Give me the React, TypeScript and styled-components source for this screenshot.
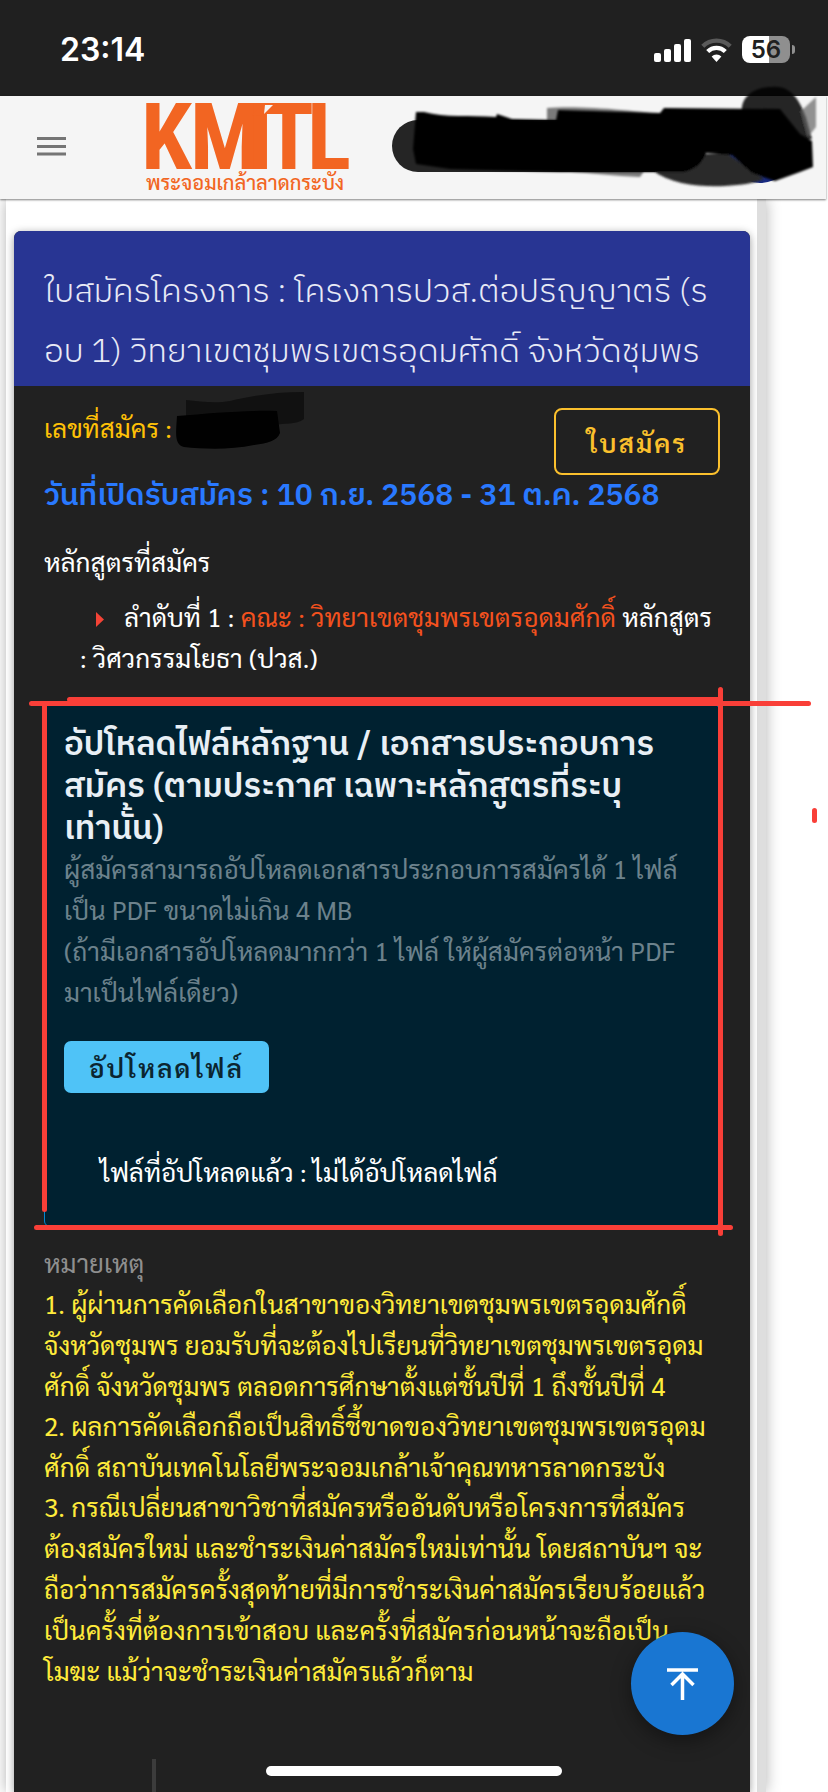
import React from 'react';
import styled, { createGlobalStyle } from 'styled-components';

const looped = '"Sarabun", "Noto Sans Thai Looped", "Loma", "Noto Sans", sans-serif';
const loopless = '"IBM Plex Sans Thai", "Noto Sans Thai", "Noto Sans", sans-serif';

const GlobalStyle = createGlobalStyle`
  * { box-sizing: border-box; }
  body { margin: 0; background: #fff; color: #fff; font-family: ${looped}; }
  h1, h2, p, ul, ol { margin: 0; padding: 0; font-weight: 400; }
  ol, ul { list-style: none; }
  button { font-family: inherit; cursor: pointer; }
`;

const Screen = styled.div`
  position: relative;
  display: flex;
  flex-direction: column;
  height: 100vh;
  overflow: hidden;
`;

const StatusBar = styled.div`
  display: flex;
  flex: none;
  align-items: center;
  justify-content: space-between;
  height: 96px;
  padding: 3px 33px 0 60px;
  background: #202020;
`;

const Clock = styled.time`
  font: 600 32px/40px Inter, sans-serif;
`;

const StatusIcons = styled.div`
  display: flex;
  align-items: center;
  gap: 10px;
`;

const Battery = styled.div`
  position: relative;
  width: 48px;
  height: 27px;
  border-radius: 8px;
  background: linear-gradient(90deg, #fff 56%, #8f8f8f 56%);
  color: #202020;
  font: 600 24px/27px Inter, sans-serif;
  text-align: center;
  margin-right: 5px;

  &::after {
    content: '';
    position: absolute;
    left: 50px;
    top: 9px;
    width: 3px;
    height: 9px;
    border-radius: 0 4px 4px 0;
    background: #8f8f8f;
  }
`;

const AppBar = styled.header`
  position: relative;
  z-index: 1;
  display: flex;
  flex: none;
  align-items: center;
  height: 103px;
  margin-right: 2px;
  padding: 0 8px 3px 37px;
  background: #f5f5f5;
  box-shadow: 0 1px 2px rgba(0, 0, 0, 0.5);
`;

const MenuButton = styled.button`
  display: flex;
  padding: 0;
  border: 0;
  background: none;
`;

const Brand = styled.a`
  display: flex;
  flex-direction: column;
  width: 200px;
  margin-left: 80px;
  color: #f26522;
  text-decoration: none;
  white-space: nowrap;

  svg { overflow: visible; }
`;

const BrandName = styled.span`
  font: 500 20px/24px ${looped};
`;

const Redaction = styled.svg`
  flex: none;
  margin-left: auto;
  overflow: visible;
`;

const Page = styled.main`
  display: flex;
  flex: 1;
  min-height: 0;
  margin: 0 62px 0 6px;
  padding: 32px 7px 0 8px;
  border-right: 9px solid #dedede;
  background: #fff;
  box-shadow: 0 0 14px rgba(0, 0, 0, 0.3);
`;

const Card = styled.article`
  flex: 1;
  min-width: 0;
  border-radius: 7px 7px 0 0;
  background: #212121;
  box-shadow: 0 2px 8px rgba(0, 0, 0, 0.4);
  white-space: nowrap;
`;

const Title = styled.h1`
  padding: 32px 30px 3px;
  border-radius: 7px 7px 0 0;
  background: #283593;
  color: #e8eaf6;
  font: 300 33px/60px ${loopless};
`;

const CardBody = styled.div`
  padding: 22px 30px 0;
`;

const Summary = styled.div`
  display: flex;
  justify-content: space-between;
  height: 67px;
`;

const ApplicationNo = styled.p`
  position: relative;
  color: #ffc107;
  font-size: 26px;
  line-height: 38px;
`;

const NumberCover = styled.svg`
  position: absolute;
  left: 130px;
  top: -20px;
`;

const OutlineButton = styled.button`
  width: 166px;
  height: 67px;
  border: 2px solid #fbc02d;
  border-radius: 8px;
  background: none;
  color: #fbc02d;
  font-size: 26px;
  font-weight: 600;
  letter-spacing: 2px;
`;

const Period = styled.p`
  padding-top: 2px;
  color: #2979ff;
  font: 600 30px/40px ${loopless};
`;

const SectionLabel = styled.p`
  margin-top: 24px;
  font-size: 26px;
  line-height: 41px;
`;

const Programmes = styled.ul`
  margin: 14px 0 0 36px;
  font-size: 26px;
  line-height: 41px;
`;

const Bullet = styled.svg`
  margin: 0 20px 0 16px;
`;

const Faculty = styled.span`
  color: #f4511e;
`;

const Panel = styled.section`
  position: relative;
  height: 523px;
  margin-top: 26px;
  padding: 20px 19px 0;
  border: 1px solid #0288d1;
  border-radius: 6px;
  background: #002130;
`;

const PanelTitle = styled.h2`
  color: #e8eff5;
  font: 600 33px/42px ${loopless};
`;

const Hint = styled.p`
  margin-top: -3px;
  color: #6c828c;
  font-size: 26px;
  line-height: 41px;
`;

const UploadButton = styled.button`
  display: block;
  width: 205px;
  height: 52px;
  margin-top: 29px;
  border: 0;
  border-radius: 7px;
  background: #4fc3f7;
  color: #0b2530;
  font-size: 26px;
  font-weight: 600;
  letter-spacing: 2px;
`;

const FileState = styled.p`
  margin: 58px 0 0 36px;
  font-size: 26px;
  line-height: 41px;
`;

const Stroke = styled.i<{ $top?: string; $bottom?: string; $left?: string; $right?: string; $vertical?: boolean }>`
  position: absolute;
  top: ${p => p.$top ?? 'auto'};
  bottom: ${p => p.$bottom ?? 'auto'};
  left: ${p => p.$left ?? 'auto'};
  right: ${p => p.$right ?? 'auto'};
  ${p => (p.$vertical ? 'width: 5px;' : 'height: 5px;')}
  border-radius: 3px;
  background: #f93f38;
`;

const Remarks = styled.section`
  padding-top: 15px;
  font-size: 26px;
  line-height: 41px;
`;

const RemarkLabel = styled.h2`
  color: #8f8f8f;
  font-size: 26px;
  line-height: 41px;
`;

const RemarkList = styled.ol`
  color: #ffeb3b;

  li + li { margin-top: -1px; }
`;

const TableEdge = styled.div`
  width: 4px;
  height: 60px;
  margin: 68px 0 0 108px;
  background: #3c3c3c;
`;

const TopButton = styled.button`
  position: absolute;
  right: 94px;
  bottom: 57px;
  z-index: 2;
  display: grid;
  place-items: center;
  width: 103px;
  height: 103px;
  padding: 0;
  border: 0;
  border-radius: 50%;
  background: #1976d2;
  box-shadow: 0 6px 20px rgba(0, 0, 0, 0.4);
`;

const HomeIndicator = styled.div`
  position: absolute;
  bottom: 16px;
  left: 50%;
  z-index: 2;
  width: 296px;
  height: 10px;
  margin-left: -148px;
  border-radius: 5px;
  background: #fff;
`;

const remarks = [
  [
    '1. ผู้ผ่านการคัดเลือกในสาขาของวิทยาเขตชุมพรเขตรอุดมศักดิ์',
    'จังหวัดชุมพร ยอมรับที่จะต้องไปเรียนที่วิทยาเขตชุมพรเขตรอุดม',
    'ศักดิ์ จังหวัดชุมพร ตลอดการศึกษาตั้งแต่ชั้นปีที่ 1 ถึงชั้นปีที่ 4',
  ],
  [
    '2. ผลการคัดเลือกถือเป็นสิทธิ์ชี้ขาดของวิทยาเขตชุมพรเขตรอุดม',
    'ศักดิ์ สถาบันเทคโนโลยีพระจอมเกล้าเจ้าคุณทหารลาดกระบัง',
  ],
  [
    '3. กรณีเปลี่ยนสาขาวิชาที่สมัครหรืออันดับหรือโครงการที่สมัคร',
    'ต้องสมัครใหม่ และชำระเงินค่าสมัครใหม่เท่านั้น โดยสถาบันฯ จะ',
    'ถือว่าการสมัครครั้งสุดท้ายที่มีการชำระเงินค่าสมัครเรียบร้อยแล้ว',
    'เป็นครั้งที่ต้องการเข้าสอบ และครั้งที่สมัครก่อนหน้าจะถือเป็น',
    'โมฆะ แม้ว่าจะชำระเงินค่าสมัครแล้วก็ตาม',
  ],
];

const Lines = ({ of }: { of: string[] }) => (
  <>
    {of.map((line, i) => (
      <React.Fragment key={line}>
        {i > 0 && <br />}
        {line}
      </React.Fragment>
    ))}
  </>
);

const Signal = () => (
  <svg width="37" height="24" fill="#fff" aria-hidden="true">
    <rect x="0" y="15" width="7" height="9" rx="2" />
    <rect x="10" y="11" width="7" height="13" rx="2" />
    <rect x="20" y="6" width="7" height="18" rx="2" />
    <rect x="30" y="1" width="7" height="23" rx="2" />
  </svg>
);

const Wifi = () => (
  <svg width="31" height="24" viewBox="0 0 31 24" aria-hidden="true">
    <path d="M1.8 8.2a19.5 19.5 0 0 1 27.4 0" fill="none" stroke="#5a5a5a" strokeWidth="4.4" />
    <path d="M6.7 13.6a12.4 12.4 0 0 1 17.6 0" fill="none" stroke="#fff" strokeWidth="4.2" />
    <path d="M10.6 18.6a7 7 0 0 1 9.8 0L15.5 24z" fill="#fff" />
  </svg>
);

const Logo = () => (
  <svg width="200" height="72" viewBox="0 0 200 72" role="img" aria-label="KMITL">
    <g fill="#f26522">
      <text
        x="-5 44 102 118 161"
        y="71"
        fontFamily="'Roboto Condensed', 'Barlow Condensed', 'Fira Sans Condensed', 'Liberation Sans Narrow', Lato, sans-serif"
        fontWeight="700"
        fontSize="92"
      >
        KMITL
      </text>
      <path d="M106 17 117 6H132L117 18Z" />
    </g>
    <path d="M119 7h8l-9 9z" fill="#f5f5f5" />
  </svg>
);

export default function App() {
  return (
    <Screen>
      <GlobalStyle />
      <StatusBar>
        <Clock>23:14</Clock>
        <StatusIcons>
          <Signal />
          <Wifi />
          <Battery>56</Battery>
        </StatusIcons>
      </StatusBar>

      <AppBar>
        <MenuButton aria-label="เมนู">
          <svg width="29" height="20" stroke="#757575" strokeWidth="3" aria-hidden="true">
            <path d="M0 2.5h29M0 10.5h29M0 18h29" />
          </svg>
        </MenuButton>
        <Brand href="#">
          <Logo />
          <BrandName>พระจอมเกล้าลาดกระบัง</BrandName>
        </Brand>
        <Redaction width="426" height="103" viewBox="392 96 426 103" aria-hidden="true">
          <defs>
            <filter id="soft" x="-5%" y="-20%" width="110%" height="140%">
              <feGaussianBlur stdDeviation="1" />
            </filter>
          </defs>
          <rect x="392" y="121" width="312" height="52" rx="26" fill="#252525" />
          <circle cx="760" cy="149" r="35" fill="#182a82" />
          <g filter="url(#soft)">
            <path d="M547 109C580 106 640 112 668 116V125H547Z" fill="#000" opacity=".5" />
            <path d="M570 171H645L640 178C615 177 590 174 570 173Z" fill="#000" opacity=".5" />
            <path d="M652 171C672 186 700 188 725 187C742 186 755 184 764 180L728 155H690Z" fill="#2c2c2c" />
            <path d="M742 114C740 97 755 88 772 88C792 86 800 103 806 118L812 140H745Z" fill="#000" opacity=".85" />
            <path d="M801 112 816 98V128L808 138Z" fill="#666" opacity=".7" />
            <path d="M416 113 424 113C445 119 470 116 496 118L497 115 512 120 556 121 558 111 660 114 664 109 780 110 800 135 812 142 813 168 800 173 775 182 752 174 732 156 706 154C702 165 694 171 684 173L560 173 450 170 416 165 413 150Z" fill="#000" />
          </g>
        </Redaction>
      </AppBar>

      <Page>
        <Card>
          <Title>
            <Lines of={['ใบสมัครโครงการ : โครงการปวส.ต่อปริญญาตรี (ร', 'อบ 1) วิทยาเขตชุมพรเขตรอุดมศักดิ์ จังหวัดชุมพร']} />
          </Title>
          <CardBody>
            <Summary>
              <ApplicationNo>
                เลขที่สมัคร :
                <NumberCover width="130" height="64" viewBox="0 0 130 64" aria-hidden="true">
                  <path d="M12 12c14 1 28 4 44 1 20-5 45-9 74-9v27c-8 6-20 4-30 6H12z" fill="#111" />
                  <path d="M3 28c35-3 70-6 100-5l3 22c-3 8-12 10-26 12-24 5-50 4-70 2-10-2-8-14-7-31z" fill="#010101" />
                </NumberCover>
              </ApplicationNo>
              <OutlineButton>ใบสมัคร</OutlineButton>
            </Summary>
            <Period>วันที่เปิดรับสมัคร : 10 ก.ย. 2568 - 31 ต.ค. 2568</Period>
            <SectionLabel>หลักสูตรที่สมัคร</SectionLabel>
            <Programmes>
              <li>
                <Bullet width="8" height="15" viewBox="0 0 8 15" aria-hidden="true">
                  <path d="M0 0 8 7.500 0 15Z" fill="#f44336" />
                </Bullet>
                ลำดับที่ 1 : <Faculty>คณะ : วิทยาเขตชุมพรเขตรอุดมศักดิ์</Faculty> หลักสูตร
                <br />: วิศวกรรมโยธา (ปวส.)
              </li>
            </Programmes>

            <Panel>
              <PanelTitle>
                <Lines of={['อัปโหลดไฟล์หลักฐาน / เอกสารประกอบการ', 'สมัคร (ตามประกาศ เฉพาะหลักสูตรที่ระบุ', 'เท่านั้น)']} />
              </PanelTitle>
              <Hint>
                <Lines
                  of={[
                    'ผู้สมัครสามารถอัปโหลดเอกสารประกอบการสมัครได้ 1 ไฟล์',
                    'เป็น PDF ขนาดไม่เกิน 4 MB',
                    '(ถ้ามีเอกสารอัปโหลดมากกว่า 1 ไฟล์ ให้ผู้สมัครต่อหน้า PDF',
                    'มาเป็นไฟล์เดียว)',
                  ]}
                />
              </Hint>
              <UploadButton>อัปโหลดไฟล์</UploadButton>
              <FileState>ไฟล์ที่อัปโหลดแล้ว : ไม่ได้อัปโหลดไฟล์</FileState>
              <Stroke $top="-4px" $left="-16px" $right="-92px" />
              <Stroke $top="-8px" $left="22px" $right="-2px" />
              <Stroke $top="-4px" $bottom="14px" $left="-3px" $vertical />
              <Stroke $top="-18px" $bottom="-10px" $right="-4px" $vertical />
              <Stroke $bottom="-4px" $left="-11px" $right="-14px" />
              <Stroke $top="103px" $bottom="403px" $right="-98px" $vertical />
            </Panel>

            <Remarks>
              <RemarkLabel>หมายเหตุ</RemarkLabel>
              <RemarkList>
                {remarks.map(lines => (
                  <li key={lines[0]}>
                    <Lines of={lines} />
                  </li>
                ))}
              </RemarkList>
            </Remarks>
            <TableEdge />
          </CardBody>
        </Card>
      </Page>

      <TopButton aria-label="กลับขึ้นด้านบน">
        <svg width="31" height="32" viewBox="0 0 31 32" fill="none" stroke="#fff" strokeWidth="3.500" aria-hidden="true">
          <path d="M0 2h31M15.500 32V7M4.500 17 15.500 6 26.500 17" />
        </svg>
      </TopButton>
      <HomeIndicator />
    </Screen>
  );
}
